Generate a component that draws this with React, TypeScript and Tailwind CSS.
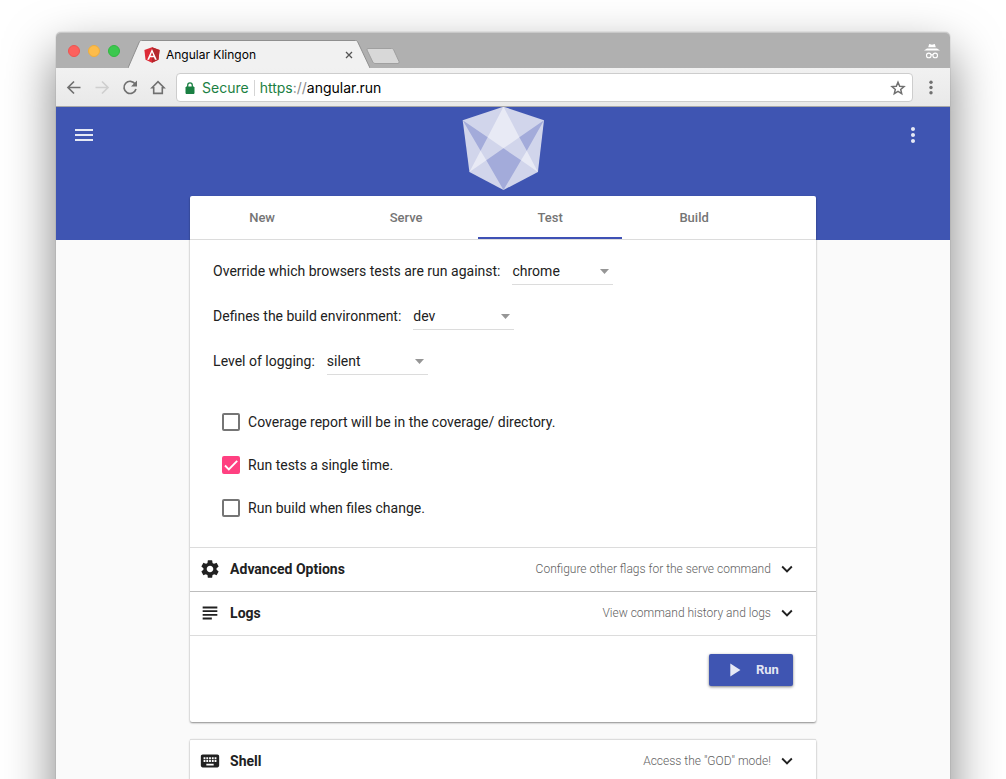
import { useState, type ReactNode } from "react";
import {
  MdExpandMore,
  MdKeyboard,
  MdMenu,
  MdMoreVert,
  MdPlayArrow,
  MdSettings,
  MdSubject,
} from "react-icons/md";

function TitleBar() {
  return (
    <div className="flex h-9 items-end rounded-t-[5px] border-t border-[#c9c9c9] bg-[#b0b0b0] pl-3 pr-2">
      <div className="flex h-7 gap-2 pt-[5px]">
        <button aria-label="Close window" className="size-3 rounded-full border border-[#ee5450] bg-[#fc615d]" />
        <button aria-label="Minimize window" className="size-3 rounded-full border border-[#f0ae3c] bg-[#fdbc4b]" />
        <button aria-label="Zoom window" className="size-3 rounded-full border border-[#30b840] bg-[#3bc84e]" />
      </div>
      <div className="relative ml-2 flex h-7 w-[242px] items-center pl-4 pr-[17px] pt-0.5">
        <svg className="absolute inset-0 size-full" viewBox="0 0 242 28" preserveAspectRatio="none" aria-hidden="true">
          <path d="M0 28 L11.5 1.5 Q12 .5 13.5 .5 H227.500 Q229 .5 229.500 1.500 L242 28 Z" fill="#f1f1f1" />
          <path d="M0 28 L11.5 1.5 Q12 .5 13.5 .5 H227.500 Q229 .5 229.500 1.500 L242 28" fill="none" stroke="#8f8f8f" />
        </svg>
        <svg className="relative h-4 w-4 shrink-0" viewBox="0 0 250 250" aria-hidden="true">
          <path fill="#dd2b37" d="M125 4 6 46l18 155 101 47 101-47 18-155z" />
          <path fill="#b5272d" d="M125 4v244l101-47 18-155z" />
          <path fill="#fff" d="M125 30 50 198h29l15-38h62l15 38h29zm22 106h-44l22-54z" />
        </svg>
        <span className="relative ml-1.5 flex-1 text-[12px] text-black">Angular Klingon</span>
        <button aria-label="Close tab" className="relative">
          <svg className="size-2" viewBox="0 0 8 8" aria-hidden="true">
            <path d="M1 1l6 6M7 1L1 7" stroke="#555" strokeWidth="1.300" />
          </svg>
        </button>
      </div>
      <button aria-label="New tab" className="-ml-1 mb-1">
        <svg className="h-4 w-[34px]" viewBox="0 0 34 16" aria-hidden="true">
          <path d="M2 .5H25.500Q27 .5 27.500 1.500L33 13.500Q33.500 15.500 32 15.500H9Q7.500 15.500 6.800 14L1 2Q.5 .5 2 .5Z" fill="#d8d8d8" stroke="#a0a0a0" />
        </svg>
      </button>
      <div className="ml-auto flex h-7 items-start pt-1">
        <svg className="h-4 w-5" viewBox="0 0 20 16" fill="#fff" aria-label="Incognito" role="img">
          <path d="M7.200 0 10 .8l2.800-.8 1 3.300H6.200zM5 4.400h10l3 2H2z" />
          <circle cx="6.800" cy="11.400" r="2.300" fill="none" stroke="#fff" strokeWidth="1.100" />
          <circle cx="13.200" cy="11.400" r="2.300" fill="none" stroke="#fff" strokeWidth="1.100" />
          <path d="M9 11q1-.8 2 0" fill="none" stroke="#fff" strokeWidth="1.100" />
        </svg>
      </div>
    </div>
  );
}

function NavButton({ label, children, faded = false }: { label: string; children: ReactNode; faded?: boolean }) {
  return (
    <button aria-label={label} disabled={faded} className={faded ? "text-[#cfcfcf]" : "text-[#707070]"}>
      <svg className="size-5" viewBox="0 0 20 20" fill="none" stroke="currentColor" strokeWidth="1.700" aria-hidden="true">
        {children}
      </svg>
    </button>
  );
}

function Toolbar() {
  return (
    <div className="flex h-[39px] items-center gap-2 border-b border-[#a8a8a8] bg-linear-to-b from-[#f1f1f1] to-[#e9e9e9] pl-2 pr-[9px]">
      <NavButton label="Back">
        <path d="M16.500 10.500H4.500M10 4.500l-6 6 6 6" />
      </NavButton>
      <NavButton label="Forward" faded>
        <path d="M3.500 10.500h12M10 4.500l6 6-6 6" />
      </NavButton>
      <NavButton label="Reload">
        <path d="M15.200 7A6.100 6.100 0 1 0 16 12" />
        <path d="M17 3.500v6h-6z" fill="currentColor" stroke="none" />
      </NavButton>
      <NavButton label="Home">
        <path d="M4 10.700 10 4.700l6 6h-1.700v5.700H5.700v-5.700z" strokeWidth="1.600" />
      </NavButton>
      <div className="flex h-[29px] flex-1 items-center rounded border border-[#cdcdcd] bg-white pl-2 pr-1 pt-px text-sm">
        <button className="flex items-center gap-[7px] text-[#1b8043]">
          <svg className="h-3 w-2.5" viewBox="0 0 10 12" aria-hidden="true">
            <path d="M1 5h8v6.500H1z" fill="currentColor" stroke="currentColor" strokeLinejoin="round" />
            <path d="M2.700 5V3.200a2.300 2.300 0 0 1 4.600 0V5" fill="none" stroke="currentColor" strokeWidth="1.300" />
          </svg>
          Secure
        </button>
        <span className="mx-[5px] h-4 w-px bg-[#d5d5d5]" />
        <label htmlFor="address" className="text-[#1b8043]">
          https<span className="text-[#8a8a8a]">://</span>
        </label>
        <input id="address" defaultValue="angular.run" className="min-w-0 flex-1 bg-transparent text-black outline-none" />
        <NavButton label="Bookmark this page">
          <path d="m10 4.200 1.700 4 4.300.4-3.300 2.800 1 4.200-3.700-2.200-3.700 2.200 1-4.200L4 8.600l4.300-.4z" strokeWidth="1.500" />
        </NavButton>
      </div>
      <NavButton label="Browser menu">
        <g fill="currentColor" stroke="none">
          <circle cx="10" cy="5.200" r="1.700" />
          <circle cx="10" cy="10.500" r="1.700" />
          <circle cx="10" cy="15.800" r="1.700" />
        </g>
      </NavButton>
    </div>
  );
}

function Logo() {
  return (
    <svg className="h-[84px] w-[82px]" viewBox="68 38 243 252" preserveAspectRatio="none" role="img" aria-label="Angular Klingon">
      <path fill="#d1d5eb" d="M191 37 311 78 293 233 191 287 90 233 70 78z" />
      <path fill="#e8eaf5" d="M191 37 238 129 191 162 144 129zM123 169 140 198 90 233zM260 169 243 198 293 233z" />
      <path fill="#a3abda" d="M70 78 144 129 123 169zM311 78 238 129 260 169zM191 162 243 198 191 287 140 198z" />
    </svg>
  );
}

const TABS = ["New", "Serve", "Test", "Build"];

function SelectField({ id, label, options }: { id: string; label: string; options: string[] }) {
  return (
    <div className="flex h-[30px] items-center gap-3">
      <label htmlFor={id} className="pt-0.5">
        {label}
      </label>
      <div className="relative">
        <select id={id} className="block h-[30px] w-[101px] appearance-none border-b border-[#dcdcdc] bg-transparent pt-[3px] outline-none">
          {options.map((option) => (
            <option key={option}>{option}</option>
          ))}
        </select>
        <svg className="pointer-events-none absolute right-1 top-3.5 h-[5px] w-[9px]" viewBox="0 0 9 5" aria-hidden="true">
          <path d="M0 0h9L4.500 5z" fill="#969696" />
        </svg>
      </div>
    </div>
  );
}

function CheckField({ label, checked = false }: { label: string; checked?: boolean }) {
  return (
    <label className="flex h-6 items-center gap-2">
      <span className="relative block size-[18px]">
        <input
          type="checkbox"
          defaultChecked={checked}
          className="peer block size-[18px] appearance-none rounded-[2px] border-2 border-[#757575] checked:border-[#ff4081] checked:bg-[#ff4081]"
        />
        <svg className="pointer-events-none absolute inset-0 hidden size-full peer-checked:block" viewBox="0 0 18 18" aria-hidden="true">
          <path d="M3 9.500 6.800 13.300 15.200 4.800" fill="none" stroke="#fff" strokeWidth="1.900" />
        </svg>
      </span>
      {label}
    </label>
  );
}

function PanelRow({ icon, title, description, border }: { icon: ReactNode; title: string; description: string; border: string }) {
  return (
    <button aria-expanded="false" className={`flex h-11 w-full items-center border-t pb-px pl-[9px] pr-[18px] text-[#212121] ${border}`}>
      {icon}
      <span className="ml-[9px] text-[14px] font-bold">{title}</span>
      <span className="ml-auto mr-[5px] text-[12px] font-light text-[#616161]">{description}</span>
      <MdExpandMore className="size-[22px]" />
    </button>
  );
}

export default function App() {
  const [tab, setTab] = useState("Test");

  return (
    <div className="h-screen overflow-hidden bg-white px-14 pt-8 font-['Inter',sans-serif]">
      <div className="min-h-full rounded-t-[5px] shadow-[0_0_1px_rgba(0,0,0,0.5),0_22px_50px_rgba(0,0,0,0.5)]">
        <TitleBar />
        <Toolbar />
        <div className="min-h-screen bg-[#fafafa] font-['Roboto',sans-serif] text-[14px] text-[#212121]">
          <header className="grid h-[133px] grid-cols-[1fr_auto_1fr] items-start bg-[#3f55b2] text-white/87">
            <button aria-label="Open menu" className="ml-4 mt-4 justify-self-start">
              <MdMenu className="size-6" />
            </button>
            <Logo />
            <button aria-label="More options" className="mr-[25px] mt-4 justify-self-end">
              <MdMoreVert className="size-6" />
            </button>
          </header>

          <main className="mx-auto -mt-11 flex w-7/10 flex-col gap-[17px]">
            <section className="rounded-[2px] bg-white shadow-[0_1px_2px_rgba(0,0,0,0.45)]">
              <div role="tablist" className="flex h-11 border-b border-[#dcdcdc]">
                {TABS.map((name) => (
                  <button
                    key={name}
                    role="tab"
                    aria-selected={tab === name}
                    onClick={() => setTab(name)}
                    className={`w-36 border-b-2 pt-0.5 text-[13px] font-medium text-[#757575] ${tab === name ? "border-[#3f51b5]" : "border-transparent"}`}
                  >
                    {name}
                  </button>
                ))}
              </div>

              <div className="px-[23px] pb-[27px] pt-[15px]">
                <div className="flex flex-col gap-[15px]">
                  <SelectField id="browsers" label="Override which browsers tests are run against:" options={["chrome", "firefox", "safari"]} />
                  <SelectField id="environment" label="Defines the build environment:" options={["dev", "prod"]} />
                  <SelectField id="logging" label="Level of logging:" options={["silent", "info", "debug"]} />
                </div>
                <div className="mt-[35px] flex flex-col gap-[19px] pl-[9px]">
                  <CheckField label="Coverage report will be in the coverage/ directory." />
                  <CheckField label="Run tests a single time." checked />
                  <CheckField label="Run build when files change." />
                </div>
              </div>

              <PanelRow
                icon={<MdSettings className="size-[22px]" />}
                title="Advanced Options"
                description="Configure other flags for the serve command"
                border="border-[#dcdcdc]"
              />
              <PanelRow
                icon={<MdSubject className="size-[22px]" />}
                title="Logs"
                description="View command history and logs"
                border="border-[#bdbdbd]"
              />

              <div className="flex justify-end border-t border-[#dcdcdc] px-[23px] pb-9 pt-[18px]">
                <button className="flex h-8 w-[84px] items-center justify-between rounded-[2px] bg-[#3f55b2] pl-3.5 pr-3.5 text-[13px] font-bold text-white/87 shadow-[0_1px_3px_rgba(0,0,0,0.5)]">
                  <MdPlayArrow className="size-[22px]" />
                  Run
                </button>
              </div>
            </section>

            <section className="rounded-[2px] bg-white shadow-[0_1px_2px_rgba(0,0,0,0.45)]">
              <PanelRow
                icon={<MdKeyboard className="size-[22px]" />}
                title="Shell"
                description={'Access the "GOD" mode!'}
                border="border-[#dcdcdc]"
              />
            </section>
          </main>
        </div>
      </div>
    </div>
  );
}
